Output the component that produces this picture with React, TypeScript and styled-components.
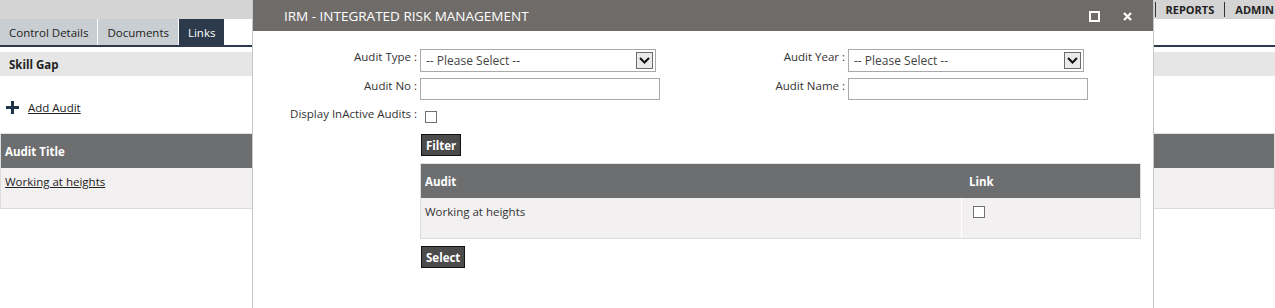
import React from "react";
import styled, { createGlobalStyle } from "styled-components";

const GlobalStyle = createGlobalStyle`
  html, body {
    margin: 0;
    padding: 0;
    background: #fff;
    font-family: "Segoe UI", "Open Sans", sans-serif;
    font-size: 11.5px;
    color: #333;
    overflow: hidden;
  }
`;

const Page = styled.div`
  position: relative;
  width: 1275px;
  height: 308px;
  overflow: hidden;
`;

const TopBar = styled.div`
  height: 19px;
  background: #d4d4d4;
  display: flex;
  justify-content: flex-end;
  align-items: center;
`;

const NavItem = styled.div`
  display: flex;
  align-items: center;
  height: 15px;
  padding: 0 10px;
  border-left: 1px solid #333;
  font-weight: 700;
  font-size: 11px;
  color: #222;
  white-space: nowrap;
  &:last-child {
    padding-right: 1px;
  }
`;

const TabRow = styled.div`
  display: flex;
  height: 26px;
  border-bottom: 2px solid #2c3a4b;
  margin-bottom: 5px;
`;

const Tab = styled.div<{ $active?: boolean }>`
  display: flex;
  align-items: center;
  padding: 0 9px;
  margin-right: 1px;
  background: ${(p) => (p.$active ? "#2c3a4b" : "#c9ced2")};
  color: ${(p) => (p.$active ? "#fff" : "#222")};
`;

const SectionBar = styled.div`
  height: 24px;
  background: #e6e6e6;
  display: flex;
  align-items: center;
  padding-left: 9px;
  font-weight: 700;
  color: #222;
`;

const AddRow = styled.div`
  display: flex;
  align-items: center;
  gap: 9px;
  padding: 19px 0 0 6px;
  height: 24px;
`;

const LinkText = styled.a`
  color: #222;
  text-decoration: underline;
  cursor: pointer;
`;

const Grid = styled.div<{ $cols: string }>`
  display: grid;
  grid-template-columns: ${(p) => p.$cols};
  border: 1px solid #dcdcdc;
  border-top-color: #e4e4e4;
`;

const HeadCell = styled.div`
  height: 34px;
  background: #6d6e70;
  color: #fff;
  font-weight: 700;
  display: flex;
  align-items: center;
  padding-left: 4px;
`;

const BodyCell = styled.div<{ $divider?: boolean }>`
  height: 40px;
  background: #f2f0f0;
  padding: 6px 0 0 4px;
  box-sizing: border-box;
  border-left: ${(p) => (p.$divider ? "1px solid #fff" : "none")};
`;

const BackTable = styled.div`
  margin-top: 14px;
`;

/* modal */

const Modal = styled.div`
  position: absolute;
  left: 252px;
  top: 0;
  width: 900px;
  height: 330px;
  background: #fff;
  border-left: 1px solid #c6c6c6;
  border-right: 1px solid #c6c6c6;
`;

const ModalHeader = styled.div`
  height: 31px;
  background: #6f6b69;
  display: flex;
  align-items: center;
  padding: 0 21px 0 31px;
  color: #fff;
`;

const ModalTitle = styled.div`
  flex: 1;
  font-size: 13.5px;
`;

const HeaderIcons = styled.div`
  display: flex;
  align-items: center;
  gap: 23px;
  margin-top: 1px;
`;

const ModalBody = styled.div`
  padding: 18px 0 0 0;
`;

const Form = styled.div`
  display: grid;
  grid-template-columns: 164px 240px 182px 240px;
  column-gap: 3px;
  row-gap: 6px;
  align-items: start;
`;

const Label = styled.div`
  text-align: right;
  white-space: nowrap;
  line-height: 16px;
  color: #333;
`;

const SelectBox = styled.div`
  width: 236px;
  height: 23px;
  box-sizing: border-box;
  border: 1px solid #a9a9a9;
  display: flex;
  align-items: center;
  justify-content: space-between;
  padding: 0 2px 0 5px;
  color: #444;
  font-size: 12px;
`;

const SelectArrow = styled.div`
  width: 17px;
  height: 17px;
  box-sizing: border-box;
  border: 1px solid #6c6c6c;
  background: #eaeaea;
  display: flex;
  align-items: center;
  justify-content: center;
`;

const TextInput = styled.div`
  width: 240px;
  height: 22px;
  box-sizing: border-box;
  border: 1px solid #a9a9a9;
`;

const Check = styled.div<{ $ml?: number }>`
  width: 12px;
  height: 12px;
  box-sizing: border-box;
  border: 1px solid #707070;
  background: #fff;
  margin-left: ${(p) => p.$ml ?? 0}px;
`;

const CheckWrap = styled.div`
  padding-top: 5px;
`;

const Controls = styled.div`
  margin-left: 167px;
  width: 721px;
`;

const DarkButton = styled.button`
  display: block;
  height: 22px;
  padding: 0 4px;
  margin-left: 1px;
  background: #4b4b4b;
  border: 1px solid #111;
  color: #fff;
  font-family: inherit;
  font-weight: 700;
  font-size: 11.5px;
  cursor: pointer;
`;

const FilterButton = styled(DarkButton)`
  margin-top: 11px;
  margin-bottom: 7px;
`;

const SelectButton = styled(DarkButton)`
  margin-top: 7px;
`;

const CheckCell = styled(BodyCell)`
  padding: 8px 0 0 11px;
`;

const LinkHead = styled(HeadCell)`
  padding-left: 8px;
`;

const Plus = () => (
  <svg width="13" height="13" viewBox="0 0 13 13">
    <path d="M6.5 0v13M0 6.5h13" stroke="#1f3349" strokeWidth="3" />
  </svg>
);

const Chevron = () => (
  <svg width="11" height="7" viewBox="0 0 11 7">
    <path d="M1 1l4.5 4.5L10 1" stroke="#111" strokeWidth="2" fill="none" />
  </svg>
);

const MaxIcon = () => (
  <svg width="11" height="11" viewBox="0 0 11 11">
    <rect x="1" y="1" width="9" height="9" stroke="#fff" strokeWidth="2" fill="none" />
  </svg>
);

const CloseIcon = () => (
  <svg width="9" height="9" viewBox="0 0 9 9">
    <path d="M1 1l7 7M8 1l-7 7" stroke="#fff" strokeWidth="2.2" />
  </svg>
);

export default function App() {
  return (
    <Page>
      <GlobalStyle />
      <TopBar>
        <NavItem>REPORTS</NavItem>
        <NavItem>ADMIN</NavItem>
      </TopBar>
      <TabRow>
        <Tab>Control Details</Tab>
        <Tab>Documents</Tab>
        <Tab $active>Links</Tab>
      </TabRow>
      <SectionBar>Skill Gap</SectionBar>
      <AddRow>
        <Plus />
        <LinkText>Add Audit</LinkText>
      </AddRow>
      <BackTable>
        <Grid $cols="1fr">
          <HeadCell>Audit Title</HeadCell>
          <BodyCell>
            <LinkText>Working at heights</LinkText>
          </BodyCell>
        </Grid>
      </BackTable>

      <Modal>
        <ModalHeader>
          <ModalTitle>IRM - INTEGRATED RISK MANAGEMENT</ModalTitle>
          <HeaderIcons>
            <MaxIcon />
            <CloseIcon />
          </HeaderIcons>
        </ModalHeader>
        <ModalBody>
          <Form>
            <Label>Audit Type :</Label>
            <SelectBox>
              -- Please Select --
              <SelectArrow>
                <Chevron />
              </SelectArrow>
            </SelectBox>
            <Label>Audit Year :</Label>
            <SelectBox>
              -- Please Select --
              <SelectArrow>
                <Chevron />
              </SelectArrow>
            </SelectBox>

            <Label>Audit No :</Label>
            <TextInput />
            <Label>Audit Name :</Label>
            <TextInput />

            <Label>Display InActive Audits :</Label>
            <CheckWrap>
              <Check $ml={5} />
            </CheckWrap>
          </Form>
          <Controls>
            <FilterButton>Filter</FilterButton>
            <Grid $cols="540px 1fr">
              <HeadCell>Audit</HeadCell>
              <LinkHead>Link</LinkHead>
              <BodyCell>Working at heights</BodyCell>
              <CheckCell $divider>
                <Check />
              </CheckCell>
            </Grid>
            <SelectButton>Select</SelectButton>
          </Controls>
        </ModalBody>
      </Modal>
    </Page>
  );
}
